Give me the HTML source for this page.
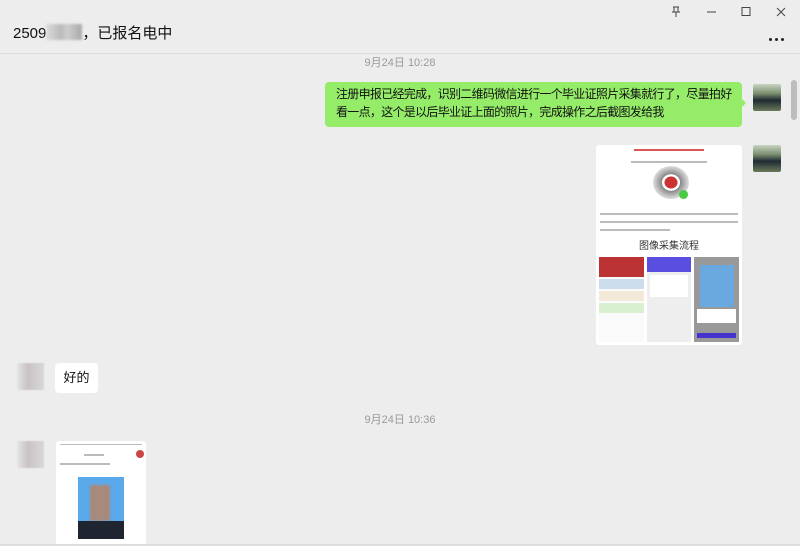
<!DOCTYPE html>
<html><head><meta charset="utf-8"><style>
*{margin:0;padding:0;box-sizing:border-box}
body{width:800px;height:546px;background:#ededed;font-family:"Liberation Sans","Noto Sans CJK SC",sans-serif;position:relative;overflow:hidden}
.a{position:absolute}
.t{font-size:11px;color:#9a9a9a}
.bar{position:absolute;height:2px;background:#bbb}
.d{position:absolute;width:3px;height:3px;border-radius:50%;background:#222;top:38px}
</style></head><body>
<div class="a" style="left:0;top:0;width:800px;height:54px;border-bottom:1px solid #dcdcdc;background:#ededed"></div>
<div class="a" style="left:13px;top:22px;font-size:15px;color:#111">2509<span style="display:inline-block;width:36px;height:16px;background:linear-gradient(90deg,#ddd,#bbb 40%,#ccc 60%,#aaa);vertical-align:-2px;filter:blur(1px)"></span>，已报名电中</div>
<svg class="a" style="left:668px;top:4px" width="130" height="16" stroke="#444" fill="none" stroke-width="1">
<path d="M5 3h6M6 3v5M10 3v5M4 8h8M8 8v5"/><path d="M39 8h9"/><rect x="74" y="3.5" width="8" height="8"/><path d="M109 4l8 8M117 4l-8 8"/></svg>
<div class="d" style="left:769px"></div><div class="d" style="left:775px"></div><div class="d" style="left:781px"></div>
<div class="a t" style="left:0;width:800px;text-align:center;top:54px">9月24日 10:28</div>
<div class="a" style="left:325px;top:82px;width:417px;height:45px;background:#95ec69;border-radius:4px;padding:3px 0 0 11px;font-size:12px;letter-spacing:-0.7px;line-height:18px;color:#111;white-space:nowrap">注册申报已经完成，识别二维码微信进行一个毕业证照片采集就行了，尽量拍好<br>看一点，这个是以后毕业证上面的照片，完成操作之后截图发给我</div>
<div class="a" style="left:741px;top:98px;border:5px solid transparent;border-left-color:#95ec69"></div>
<div class="a" style="left:753px;top:84px;width:28px;height:27px;background:linear-gradient(#c9d4c2 0,#7a8f6f 35%,#1f2a33 60%,#6b7a5a);border-radius:2px"></div>
<div class="a" style="left:753px;top:145px;width:28px;height:27px;background:linear-gradient(#c9d4c2 0,#7a8f6f 35%,#1f2a33 60%,#6b7a5a);border-radius:2px"></div>
<div class="a" style="left:791px;top:80px;width:6px;height:40px;background:#bdbdbd;border-radius:3px"></div>
<div class="a" style="left:596px;top:145px;width:146px;height:200px;background:#fff;border-radius:3px;overflow:hidden">
 <div class="bar" style="left:38px;top:4px;width:70px;background:#d55"></div>
 <div class="bar" style="left:35px;top:16px;width:76px"></div>
 <div class="a" style="left:57px;top:21px;width:36px;height:33px;border-radius:50%;background:radial-gradient(#c33 0 25%,#fff 26% 35%,#888 36%,#ddd 70%)"></div>
 <div class="a" style="left:83px;top:45px;width:9px;height:9px;border-radius:50%;background:#4c4"></div>
 <div class="bar" style="left:4px;top:68px;width:138px"></div>
 <div class="bar" style="left:4px;top:76px;width:138px"></div>
 <div class="bar" style="left:4px;top:84px;width:70px"></div>
 <div class="a" style="left:0;width:146px;text-align:center;top:92px;font-size:10px;color:#333">图像采集流程</div>
 <div class="a" style="left:3px;top:112px;width:45px;height:85px;background:#fafafa"><div class="a" style="left:0;top:0;width:45px;height:20px;background:#b33"></div><div class="a" style="left:0;top:22px;width:45px;height:10px;background:#cde"></div><div class="a" style="left:0;top:34px;width:45px;height:10px;background:#f3e9d8"></div><div class="a" style="left:0;top:46px;width:45px;height:10px;background:#d8f0d0"></div></div>
 <div class="a" style="left:51px;top:112px;width:44px;height:85px;background:#eee"><div class="a" style="left:0;top:0;width:44px;height:15px;background:#5a4ee0"></div><div class="a" style="left:3px;top:18px;width:38px;height:22px;background:#fff"></div></div>
 <div class="a" style="left:98px;top:112px;width:45px;height:85px;background:#999"><div class="a" style="left:6px;top:8px;width:34px;height:42px;background:#6aa8e0"></div><div class="a" style="left:3px;top:52px;width:39px;height:14px;background:#fff"></div><div class="a" style="left:3px;top:76px;width:39px;height:5px;background:#4433cc"></div></div>
</div>
<div class="a" style="left:17px;top:363px;width:27px;height:27px;background:linear-gradient(90deg,#e5e5e5,#c9c2c6 40%,#d8d8d8);filter:blur(.5px)"></div>
<div class="a" style="left:55px;top:363px;width:43px;height:30px;background:#fff;border-radius:4px;font-size:13px;line-height:30px;text-align:center;color:#111">好的</div>
<div class="a" style="left:50px;top:373px;border:5px solid transparent;border-right-color:#fff"></div>
<div class="a t" style="left:0;width:800px;text-align:center;top:411px">9月24日 10:36</div>
<div class="a" style="left:17px;top:441px;width:27px;height:27px;background:linear-gradient(90deg,#e5e5e5,#c9c2c6 40%,#d8d8d8);filter:blur(.5px)"></div>
<div class="a" style="left:56px;top:441px;width:90px;height:105px;background:#fff;border-radius:3px;overflow:hidden">
 <div class="bar" style="left:4px;top:3px;width:82px;height:1px"></div>
 <div class="bar" style="left:28px;top:13px;width:20px"></div>
 <div class="a" style="left:80px;top:9px;width:8px;height:8px;border-radius:50%;background:#c44"></div>
 <div class="bar" style="left:4px;top:22px;width:50px"></div>
 <div class="a" style="left:22px;top:36px;width:46px;height:62px;background:#5aa9ea"><div class="a" style="left:12px;top:8px;width:20px;height:36px;background:#a88a7c;filter:blur(1px)"></div><div class="a" style="left:0;top:44px;width:46px;height:18px;background:#1e2430"></div></div>
</div>
<div class="a" style="left:0;top:544px;width:800px;height:2px;background:#ddd"></div>
</body></html>
